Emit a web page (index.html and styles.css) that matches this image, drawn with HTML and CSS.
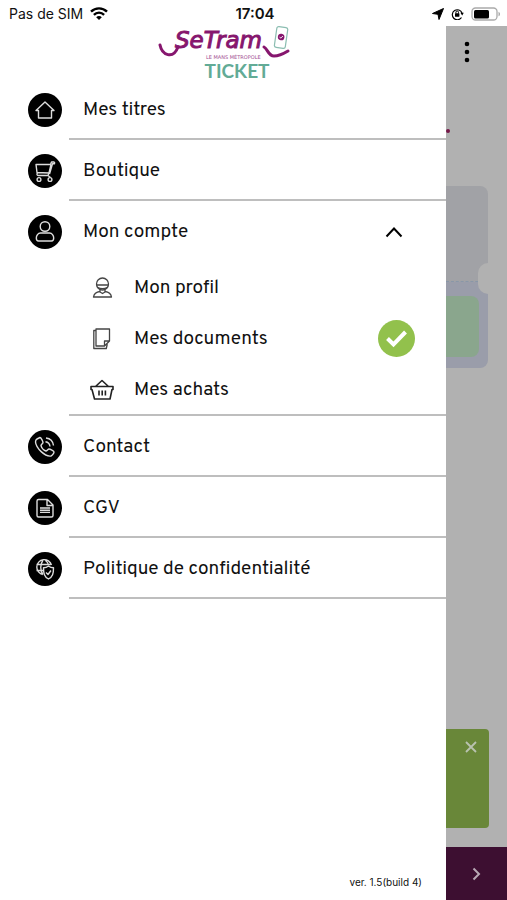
FILE: index.html
```html
<!DOCTYPE html>
<html lang="fr">
<head>
<meta charset="utf-8">
<meta name="viewport" content="width=device-width, initial-scale=1">
<title>Setram Ticket</title>
<link rel="stylesheet" href="styles.css">
</head>
<body>
<header class="status">
  <div class="status-left">
    <span>Pas de SIM</span>
    <svg width="18" height="13" viewBox="0 0 18 13" fill="none" stroke="#000" stroke-width="2.4"><path d="M1 4.7C5.5.3 12.5.3 17 4.7M3.9 7.8c2.900-2.900 7.300-2.900 10.200 0"/><path d="M9 13 6.200 10.200c1.500-1.500 4.100-1.500 5.600 0z" fill="#000" stroke="none"/></svg>
  </div>
  <strong class="clock">17:04</strong>
  <div class="status-right">
    <svg width="12" height="12" viewBox="0 0 12 12"><path d="M11.500.5 7 11.500 6 6.300.5 5.500z" stroke="#000"/></svg>
    <svg width="13" height="12" viewBox="0 0 13 12"><path d="M10.500 9.500A5 5 0 1 1 11 5" fill="none" stroke="#000" stroke-width="1.200"/><path d="M9.400 4.800h3.400L11.200 7.500z"/><rect x="4" y="5.300" width="4.400" height="3.400" rx=".5"/><path d="M4.900 5.500V4.300a1.300 1.300 0 0 1 2.600 0v1.200" fill="none" stroke="#000"/></svg>
    <svg width="30" height="14" viewBox="0 0 30 14"><rect x="1" y="1" width="25" height="12" rx="3.500" fill="#fff" stroke="#aaa" stroke-width="1.300"/><rect x="3" y="3" width="15" height="8.500" rx="1.500"/><path d="M27.500 4.700v4.600c2-.8 2-3.800 0-4.600" fill="#aaa"/></svg>
  </div>
</header>
<div class="screen">
  <nav class="drawer" aria-label="Menu">
    <div class="brand">
      <svg class="logo" width="134" height="36" viewBox="0 0 134 36">
        <g fill="none" stroke="#86166e" stroke-width="3" stroke-linecap="round"><path d="M3 19c2 10 13 15 18 2"/><path d="M107 21c4 2 4 9 10 9 5 0 9-2 14-5"/></g>
        <text class="logo-name" x="18" y="22">SeTram</text>
        <text class="logo-sub" x="49" y="33">LE MANS MÉTROPOLE</text>
        <g transform="rotate(8 124 12)"><rect x="118.500" y="1" width="11" height="21" rx="2" fill="#fff" stroke="#8bbdb1" stroke-width="1.200"/><circle cx="124" cy="11" r="3.300" fill="#86166e"/><path d="m122.500 11 1.200 1.200 2-2.400" fill="none" stroke="#fff" stroke-width=".8"/></g>
      </svg>
      <span class="brand-ticket">TICKET</span>
    </div>
    <ul class="menu">
      <li class="row">
        <svg class="badge" viewBox="0 0 34 34"><circle class="disc" cx="17" cy="17" r="17"/><path d="m8 17.500 9-8.500 9 8.500h-2.500V25h-13v-7.500z"/></svg>
        <a class="label" href="#titres">Mes titres</a>
      </li>
      <li class="row">
        <svg class="badge" viewBox="0 0 34 34"><circle class="disc" cx="17" cy="17" r="17"/><path d="M26.500 8h-3l-1 2.500H8l1 8 12 .5 2-8.500M26.500 8v1.800h-2L21.500 20M21 19l-1 2.500H10.500c-2 0-2-2.500-.5-2.500M20 21.500l2.500 2"/><circle cx="11" cy="25.500" r="1.900"/><circle cx="22" cy="25.500" r="1.900"/></svg>
        <a class="label" href="#boutique">Boutique</a>
      </li>
      <li class="group">
        <div class="row">
          <svg class="badge" viewBox="0 0 34 34"><circle class="disc" cx="17" cy="17" r="17"/><circle cx="17" cy="11.500" r="4.800"/><path d="M12.500 18h9c2.500 0 4.200 2.500 4.200 5 0 2-.7 3-2.200 3h-13c-1.500 0-2.200-1-2.200-3 0-2.500 1.700-5 4.200-5z"/></svg>
          <button class="label toggle" type="button" aria-expanded="true">Mon compte
            <svg width="18" height="12" viewBox="0 0 18 12" fill="none" stroke="#000" stroke-width="2"><path d="m1.500 10.500 7.500-8 7.500 8"/></svg>
          </button>
        </div>
        <ul class="submenu">
          <li><a class="sub" href="#profil">
            <svg class="glyph" viewBox="0 0 24 24"><circle cx="12.500" cy="8" r="6"/><path d="M6.500 9h12M8 11.500c2 1.500 7 1.500 9 0M10 13.500v2.500l2.500 1.500L15 16v-2.500M10 15.500c-4 .5-6 2-6.500 5.500h18c-.5-3.500-2.500-5-6.500-5.500"/></svg>
            <span>Mon profil</span></a></li>
          <li><a class="sub" href="#documents">
            <svg class="glyph" viewBox="0 0 24 24"><path d="M6 2h13.500v12l-5 5H6zM19.500 14h-5v5M6 3.500H3.800V21.500h12.500l1-4.500"/></svg>
            <span>Mes documents</span>
            <svg class="done" width="37" height="37" viewBox="0 0 37 37"><circle cx="18.500" cy="18.500" r="18.500" fill="#92c14c"/><path d="m9.500 18.500 6 6L27.500 12" fill="none" stroke="#fff" stroke-width="4"/></svg></a></li>
          <li><a class="sub" href="#achats">
            <svg class="glyph basket" viewBox="0 0 24 24"><path d="M1 8.500h22v3h-1L20 21H4.500L2 11.500H1zM5.500 8.500 12 2.500l6.500 6"/><path d="M9 12.500v5M12.200 12.500v5M15.400 12.500v5"/></svg>
            <span>Mes achats</span></a></li>
        </ul>
      </li>
      <li class="row">
        <svg class="badge" viewBox="0 0 34 34"><circle class="disc" cx="17" cy="17" r="17"/><path d="m9 9 3-1.500c1 0 3 4 3 5s-2 2-2 3c.5 2.500 3 5 5 5.500 1 0 2-2 3-2s5 2 5 3-1.500 3.500-3 4c-6 1-15-8-15.500-14 0-1 .5-2.500 1.500-3z"/><path d="M17.500 11.800c2.500.4 4.200 2.200 4.500 4.700M18 8c4 .5 7 3.500 7.500 7.500"/></svg>
        <a class="label" href="#contact">Contact</a>
      </li>
      <li class="row">
        <svg class="badge" viewBox="0 0 34 34"><circle class="disc" cx="17" cy="17" r="17"/><path d="M10.500 8.500h9l5.500 5.500v10.500c0 1-.5 1.500-1.500 1.500h-13c-1 0-1.500-.5-1.500-1.500V10c0-1 .5-1.500 1.500-1.500zM19 9v5.500h5.500"/><path d="M12 17h10M12 19.200h10M12 21.400h10"/></svg>
        <a class="label" href="#cgv">CGV</a>
      </li>
      <li class="row">
        <svg class="badge" viewBox="0 0 34 34"><circle class="disc" cx="17" cy="17" r="17"/><path d="M15 22.500A7.500 7.500 0 1 1 23.500 13M8.500 12.500h14M8.500 18.500H15M15 22.500c-3-4-3-10 0-14.500M17 8c2 1.500 3 3 3.500 5"/><path class="disc" d="M20.500 14c1.500 1.200 3 1.700 5 1.700 0 5.800-.8 9-5 11.300-4.200-2.300-5-5.500-5-11.300 2 0 3.500-.5 5-1.700z"/><path d="M20.500 14c1.500 1.200 3 1.700 5 1.700 0 5.800-.8 9-5 11.300-4.200-2.300-5-5.500-5-11.300 2 0 3.500-.5 5-1.700zM18 20.500l2 2 3-4"/></svg>
        <a class="label" href="#confidentialite">Politique de confidentialité</a>
      </li>
    </ul>
    <p class="version">ver. 1.5(build 4)</p>
  </nav>
  <main class="page">
    <button class="more" type="button" aria-label="Options"><svg width="6" height="22" viewBox="0 0 6 22"><circle cx="3" cy="3" r="2.300"/><circle cx="3" cy="11" r="2.300"/><circle cx="3" cy="19" r="2.300"/></svg></button>
    <div class="dot"></div>
    <section class="card">
      <div class="card-top"></div>
      <div class="card-bottom"><div class="card-action"></div></div>
    </section>
    <section class="notice">
      <button type="button" aria-label="Fermer"><svg width="12" height="12" viewBox="0 0 12 12" fill="none" stroke="#b9c2b0" stroke-width="1.800"><path d="m1 1 10 10M11 1 1 11"/></svg></button>
    </section>
    <footer class="bar">
      <button type="button" aria-label="Suivant"><svg width="9" height="14" viewBox="0 0 9 14" fill="none" stroke="#b9a9b5" stroke-width="2"><path d="m1.500 1.500 5.500 5.500-5.500 5.500"/></svg></button>
    </footer>
  </main>
</div>
</body>
</html>
```
FILE: styles.css
```css
* { box-sizing: border-box; }

body {
  margin: 0;
  min-height: 100vh;
  display: flex;
  flex-direction: column;
  background: #fff;
  color: #111;
  font-family: Overpass, Roboto, sans-serif;
}

svg { display: block; flex: none; }
ul { margin: 0; padding: 0; list-style: none; }
a { color: inherit; text-decoration: none; }
button {
  margin: 0;
  padding: 0;
  border: 0;
  background: none;
  color: inherit;
  font: inherit;
}

.status {
  height: 26px;
  padding: 1px 6px 0 9px;
  display: grid;
  grid-template-columns: 1fr auto 1fr;
  align-items: center;
  font: 14px/25px Inter, sans-serif;
}
.status-left { display: flex; align-items: center; gap: 7px; }
.status-right { display: flex; align-items: center; justify-content: flex-end; gap: 7px; }
.clock { font-size: 15px; font-weight: 600; }

.screen { flex: 1; display: flex; }

.drawer {
  flex: 1;
  display: flex;
  flex-direction: column;
}
.brand {
  height: 53px;
  display: flex;
  flex-direction: column;
  align-items: center;
}
.logo { margin-left: 2px; }
.logo-name {
  font: italic 23px "DejaVu Sans", sans-serif;
  fill: #86166e;
  stroke: #86166e;
  stroke-width: 1;
}
.logo-sub { font: 5px "DejaVu Sans", sans-serif; fill: #a24d91; }
.brand-ticket {
  padding-left: 28px;
  color: #62ab96;
  font: 700 19px/18px Lato, sans-serif;
}

.row { height: 61px; display: flex; padding-left: 28px; gap: 7px; }
.badge {
  width: 34px;
  height: 34px;
  align-self: center;
  fill: none;
  stroke: #ddd;
  stroke-width: 1.4;
  stroke-linejoin: round;
}
.disc { fill: #000; stroke: none; }
.label {
  flex: 1;
  display: flex;
  align-items: center;
  padding: 3px 0 0 14px;
  border-bottom: 2px solid #bebebe;
  font-size: 19px;
}
.toggle { justify-content: space-between; padding: 0 43px 0 14px; border: 0; text-align: left; }

.submenu { margin: -1px 0 0 69px; border-bottom: 2px solid #bebebe; }
.sub {
  height: 51px;
  display: flex;
  align-items: center;
  gap: 20px;
  padding: 2px 31px 0 21px;
  font-size: 19px;
}
.glyph { width: 24px; height: 24px; fill: none; stroke: #444; stroke-width: 1.3; stroke-linejoin: round; }
.basket { stroke: #222; stroke-width: 1.6; }
.done { margin-left: auto; }

.version {
  margin: auto 24px 11px auto;
  font: 10px/14px Inter, sans-serif;
}

.page {
  width: 61px;
  display: flex;
  flex-direction: column;
  background: #b1b1b1;
}
.more { align-self: flex-start; margin: 15px 0 0 18px; }
.dot { width: 4px; height: 4px; margin-top: 66px; border-radius: 2px; background: #751848; }
.card {
  position: relative;
  margin: 53px 19px 0 0;
  border-radius: 0 8px 8px 0;
  overflow: hidden;
}
.card::after {
  content: "";
  position: absolute;
  top: 77px;
  right: -10px;
  width: 20px;
  height: 31px;
  border-radius: 10px;
  background: #b1b1b1;
}
.card-top { height: 96px; background: #a1a2a6; border-bottom: 1px dashed #8997a8; }
.card-bottom { height: 86px; padding: 14px 9px 11px 0; background: #9a9daa; }
.card-action { height: 61px; border-radius: 0 8px 8px 0; background: #8aa68d; }

.notice {
  height: 99px;
  margin: auto 18px 19px 0;
  padding: 12px 12px 0;
  display: flex;
  justify-content: flex-end;
  align-items: flex-start;
  border-radius: 0 4px 4px 0;
  background: #698739;
}
.bar {
  height: 53px;
  display: flex;
  align-items: center;
  justify-content: center;
  background: #3d0f31;
}
```
